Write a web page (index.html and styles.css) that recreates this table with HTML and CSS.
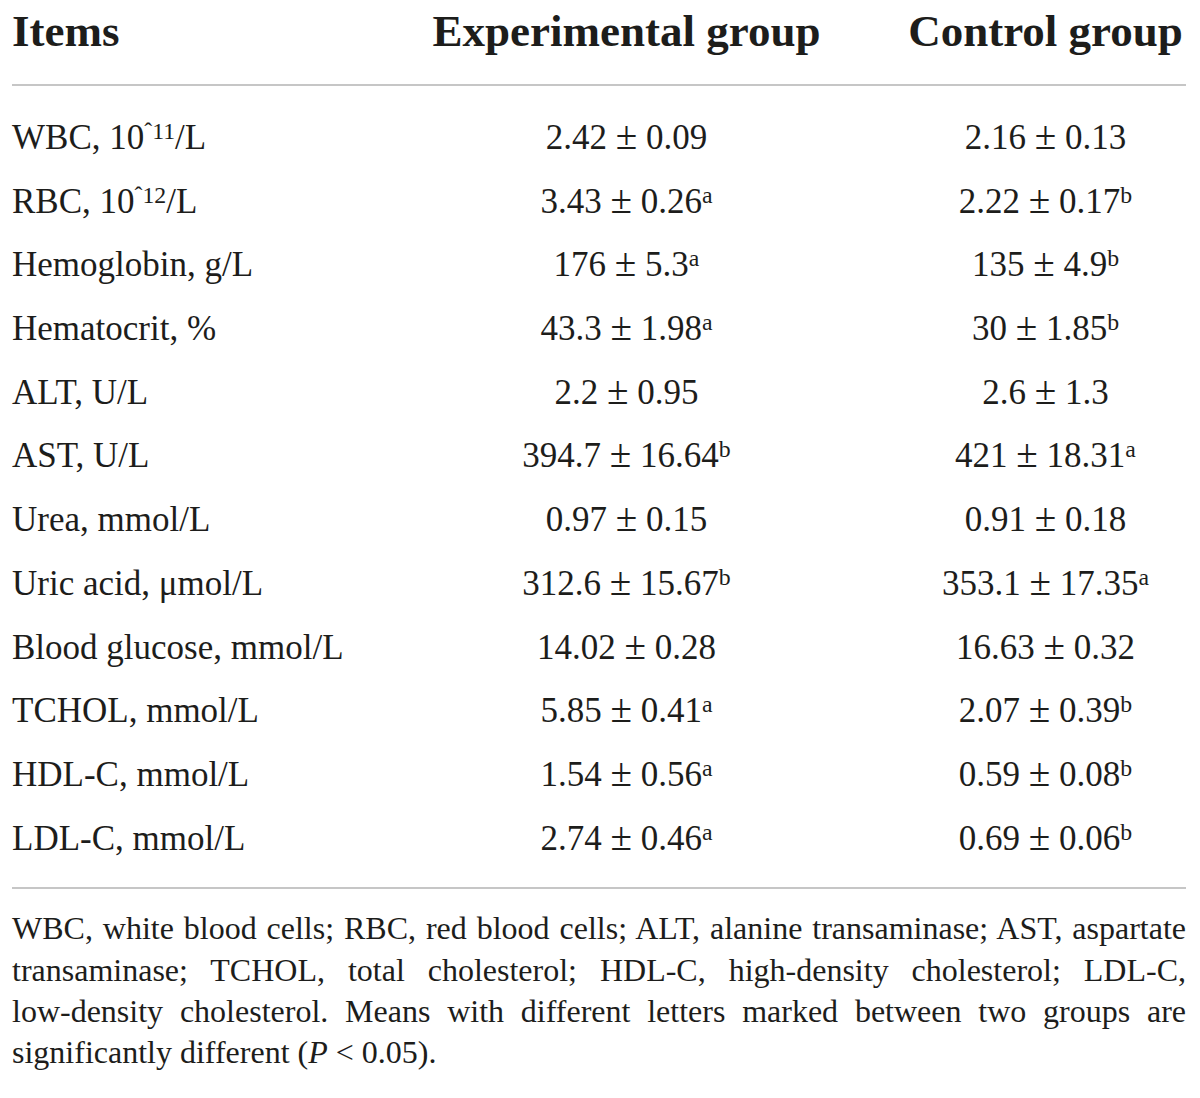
FILE: index.html
```html
<!DOCTYPE html>
<html lang="en">
<head>
<meta charset="utf-8">
<title>Blood parameters</title>
<link rel="stylesheet" href="styles.css">
</head>
<body>
<div class="wrap">
  <div class="grid head">
    <div class="c1">Items</div>
    <div class="cc">Experimental group</div>
    <div class="cc">Control group</div>
  </div>
  <div class="body">
    <div class="grid row"><div class="c1">WBC, 10<sup>ˆ11</sup>/L</div><div class="cc">2.42 <span class="pm">±</span> 0.09</div><div class="cc">2.16 <span class="pm">±</span> 0.13</div></div>
    <div class="grid row"><div class="c1">RBC, 10<sup>ˆ12</sup>/L</div><div class="cc">3.43 <span class="pm">±</span> 0.26<sup>a</sup></div><div class="cc">2.22 <span class="pm">±</span> 0.17<sup>b</sup></div></div>
    <div class="grid row"><div class="c1">Hemoglobin, g/L</div><div class="cc">176 <span class="pm">±</span> 5.3<sup>a</sup></div><div class="cc">135 <span class="pm">±</span> 4.9<sup>b</sup></div></div>
    <div class="grid row"><div class="c1">Hematocrit, %</div><div class="cc">43.3 <span class="pm">±</span> 1.98<sup>a</sup></div><div class="cc">30 <span class="pm">±</span> 1.85<sup>b</sup></div></div>
    <div class="grid row"><div class="c1">ALT, U/L</div><div class="cc">2.2 <span class="pm">±</span> 0.95</div><div class="cc">2.6 <span class="pm">±</span> 1.3</div></div>
    <div class="grid row"><div class="c1">AST, U/L</div><div class="cc">394.7 <span class="pm">±</span> 16.64<sup>b</sup></div><div class="cc">421 <span class="pm">±</span> 18.31<sup>a</sup></div></div>
    <div class="grid row"><div class="c1">Urea, mmol/L</div><div class="cc">0.97 <span class="pm">±</span> 0.15</div><div class="cc">0.91 <span class="pm">±</span> 0.18</div></div>
    <div class="grid row"><div class="c1">Uric acid, μmol/L</div><div class="cc">312.6 <span class="pm">±</span> 15.67<sup>b</sup></div><div class="cc">353.1 <span class="pm">±</span> 17.35<sup>a</sup></div></div>
    <div class="grid row"><div class="c1">Blood glucose, mmol/L</div><div class="cc">14.02 <span class="pm">±</span> 0.28</div><div class="cc">16.63 <span class="pm">±</span> 0.32</div></div>
    <div class="grid row"><div class="c1">TCHOL, mmol/L</div><div class="cc">5.85 <span class="pm">±</span> 0.41<sup>a</sup></div><div class="cc">2.07 <span class="pm">±</span> 0.39<sup>b</sup></div></div>
    <div class="grid row"><div class="c1">HDL-C, mmol/L</div><div class="cc">1.54 <span class="pm">±</span> 0.56<sup>a</sup></div><div class="cc">0.59 <span class="pm">±</span> 0.08<sup>b</sup></div></div>
    <div class="grid row"><div class="c1">LDL-C, mmol/L</div><div class="cc">2.74 <span class="pm">±</span> 0.46<sup>a</sup></div><div class="cc">0.69 <span class="pm">±</span> 0.06<sup>b</sup></div></div>
  </div>
  <div class="note">
    <div class="ln">WBC, white blood cells; RBC, red blood cells; ALT, alanine transaminase; AST, aspartate</div>
    <div class="ln">transaminase; TCHOL, total cholesterol; HDL-C, high-density cholesterol; LDL-C,</div>
    <div class="ln">low-density cholesterol. Means with different letters marked between two groups are</div>
    <div class="ln last">significantly different (<i>P</i> &lt; 0.05).</div>
  </div>
</div>
</body>
</html>
```

FILE: styles.css
```css
html, body {
  margin: 0;
  padding: 0;
  background: #ffffff;
}

body {
  font-family: "Liberation Serif", "Times New Roman", serif;
  color: #1d1d1b;
}

.wrap {
  width: 1174px;
  margin-left: 12px;
}

.grid {
  display: grid;
  grid-template-columns: 336px 557px 281px;
  align-items: baseline;
}

.cc {
  text-align: center;
  white-space: nowrap;
}

.c1 {
  white-space: nowrap;
}

.head {
  font-weight: bold;
  font-size: 45px;
  line-height: 56px;
  padding-top: 3px;
  padding-bottom: 25px;
  border-bottom: 2px solid #c6c6c6;
}

.body {
  padding-top: 20px;
  padding-bottom: 17px;
  border-bottom: 2px solid #c6c6c6;
}

.row {
  font-size: 35px;
  height: 63.7px;
  line-height: 63.7px;
}

.pm {
  font-size: 1.12em;
  line-height: 0;
}

sup {
  font-size: 0.68em;
  line-height: 0;
  vertical-align: 0.42em;
}

.note {
  padding-top: 19px;
  font-size: 32px;
  line-height: 41.3px;
}

.ln {
  text-align: justify;
  text-align-last: justify;
  white-space: nowrap;
}

.ln.last {
  text-align: left;
  text-align-last: left;
}
```
